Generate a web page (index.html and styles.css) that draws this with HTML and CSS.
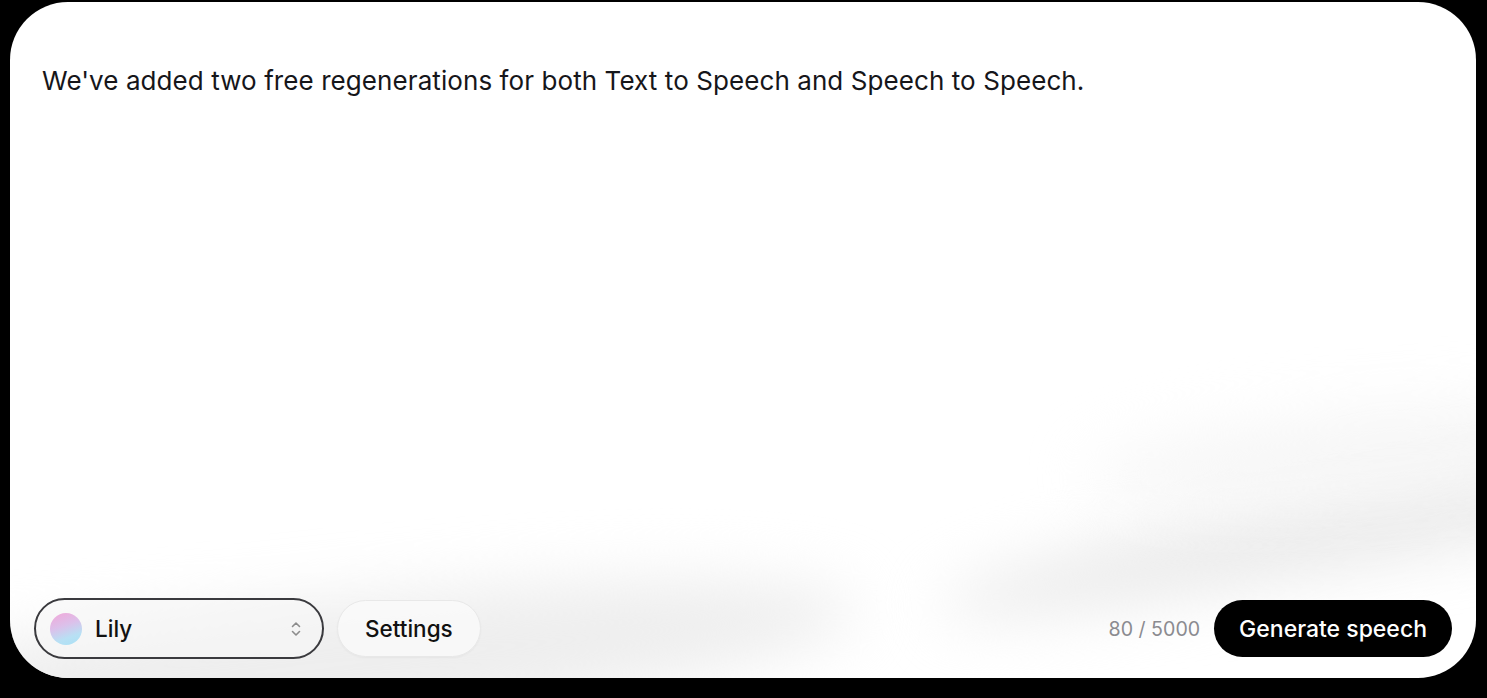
FILE: index.html
```html
<!DOCTYPE html>
<html lang="en">
<head>
<meta charset="utf-8">
<title>Text to Speech</title>
<link rel="stylesheet" href="styles.css">
</head>
<body>
<main class="card">
  <div class="swoosh swoosh-right"></div>
  <div class="swoosh swoosh-top"></div>
  <div class="swoosh swoosh-left"></div>
  <p class="content">We've added two free regenerations for both Text to Speech and Speech to Speech.</p>
  <div class="toolbar">
    <div class="left-group">
      <button class="voice-select">
        <span class="avatar"></span>
        <span class="voice-name">Lily</span>
        <svg class="chevrons" width="12" height="18" viewBox="0 0 12 18" fill="none" stroke="#8c8c8c" stroke-width="1.6" stroke-linecap="round" stroke-linejoin="round">
          <path d="M2.5 6.5 L6 3 L9.5 6.5"/>
          <path d="M2.5 11.5 L6 15 L9.5 11.5"/>
        </svg>
      </button>
      <button class="settings">Settings</button>
    </div>
    <div class="right-group">
      <span class="counter">80 / 5000</span>
      <button class="generate">Generate speech</button>
    </div>
  </div>
</main>
</body>
</html>
```

FILE: styles.css
```css
html, body {
  margin: 0;
  padding: 0;
  background: #000;
  height: 100%;
}
body {
  font-family: Inter, "Noto Sans", sans-serif;
  padding: 2px 11px 20px 10px;
  box-sizing: border-box;
}
.card {
  position: relative;
  overflow: hidden;
  height: 676px;
  background: #fff;
  border-radius: 58px;
  display: flex;
  flex-direction: column;
  justify-content: space-between;
  box-sizing: border-box;
  padding: 0 24px 19px 24px;
}
.swoosh {
  position: absolute;
  pointer-events: none;
  border-radius: 50%;
  filter: blur(30px);
}
.swoosh-right {
  width: 900px;
  height: 80px;
  left: 920px;
  top: 480px;
  background: #ebebeb;
  transform: rotate(-11deg);
}
.swoosh-top {
  width: 600px;
  height: 80px;
  left: 1080px;
  top: 410px;
  background: #f6f6f6;
  transform: rotate(-5deg);
}
.swoosh-left {
  width: 1100px;
  height: 130px;
  left: -250px;
  top: 600px;
  background: #eeeeee;
  transform: rotate(-6deg);
}
.content {
  position: relative;
  margin: 0;
  padding: 61px 8px 0 8px;
  font-size: 26px;
  line-height: 36px;
  letter-spacing: 0.08px;
  color: #16161a;
}
.toolbar {
  position: relative;
  display: flex;
  align-items: center;
  justify-content: space-between;
}
.left-group, .right-group {
  display: flex;
  align-items: center;
  gap: 13px;
}
.right-group {
  gap: 14px;
}
button {
  font-family: Inter, "Noto Sans", sans-serif;
  cursor: pointer;
}
.voice-select {
  width: 290px;
  height: 61px;
  border: 2px solid #3a3a3e;
  border-radius: 31px;
  background: rgba(246, 246, 246, 0.6);
  display: flex;
  align-items: center;
  padding: 0 20px 0 14px;
  box-sizing: border-box;
  gap: 13px;
}
.avatar {
  width: 32px;
  height: 32px;
  border-radius: 50%;
  background: linear-gradient(160deg, #f2a7d8 0%, #dcc0ea 40%, #b8e0f4 72%, #a9e1f5 100%);
  flex: none;
}
.voice-name {
  flex: 1;
  text-align: left;
  font-size: 22.5px;
  font-weight: 500;
  color: #111;
}
.chevrons {
  flex: none;
}
.settings {
  height: 57px;
  padding: 0 27px;
  border: 1px solid #e8e8e8;
  border-radius: 29px;
  background: rgba(250, 250, 250, 0.8);
  font-size: 22.5px;
  font-weight: 500;
  color: #111;
  box-shadow: 0 1px 2px rgba(0,0,0,0.04);
}
.counter {
  font-size: 19.6px;
  color: #8b8b90;
}
.generate {
  height: 57px;
  padding: 0 25px;
  border: none;
  border-radius: 29px;
  background: #000;
  color: #fff;
  font-size: 23px;
  font-weight: 500;
}
```
